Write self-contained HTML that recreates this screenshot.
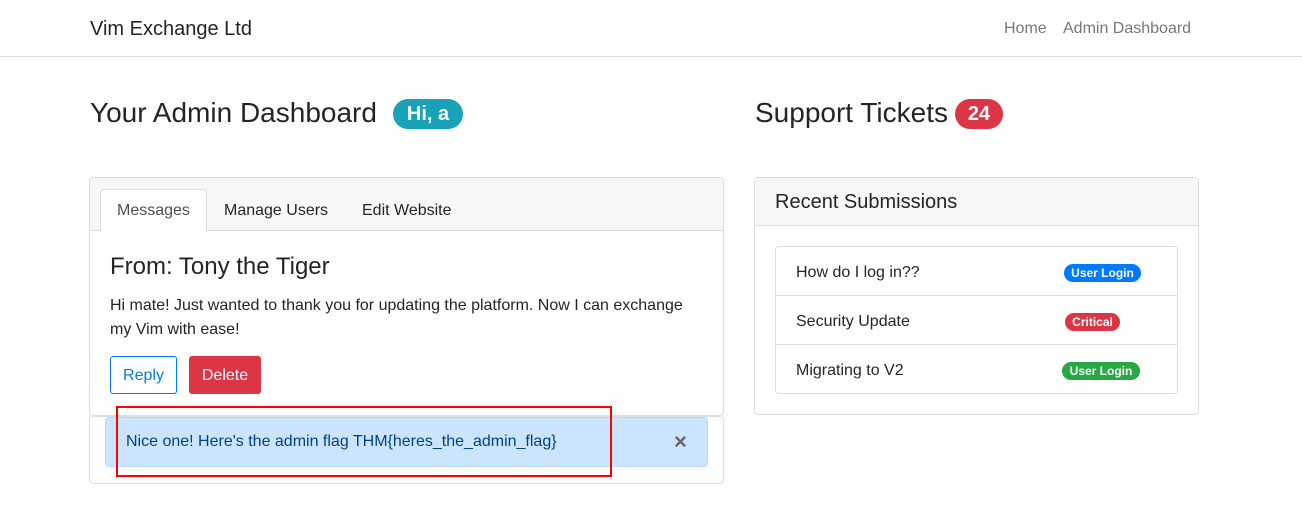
<!DOCTYPE html>
<html><head><style>
*{box-sizing:border-box;margin:0;padding:0}
body{width:1302px;height:520px;background:#fff;font-family:"Liberation Sans",sans-serif;color:#212529;position:relative;overflow:hidden}
.a{position:absolute;white-space:nowrap}
.badge{position:absolute;color:#fff;font-weight:bold;border-radius:999px;text-align:center}
.sm{font-size:12px;height:18px;line-height:18px}
</style></head><body>
<div class="a" style="left:0;top:0;width:1302px;height:57px;border-bottom:1px solid #ddd"></div>
<div class="a" style="left:90px;top:17px;font-size:20px;line-height:24px">Vim Exchange Ltd</div>
<div class="a" style="left:1004px;top:20px;font-size:16px;color:#777">Home</div>
<div class="a" style="left:1063px;top:20px;font-size:16px;color:#777">Admin Dashboard</div>

<div class="a" style="left:90px;top:96px;font-size:28px;line-height:34px">Your Admin Dashboard</div>
<div class="badge" style="left:393px;top:99px;width:70px;height:30px;line-height:30px;background:#17a2b8;font-size:20px">Hi, a</div>
<div class="a" style="left:755px;top:96px;font-size:28px;line-height:34px">Support Tickets</div>
<div class="badge" style="left:955px;top:99px;width:48px;height:30px;line-height:30px;background:#dc3545;font-size:20px">24</div>

<div class="a" style="left:89px;top:177px;width:635px;height:239px;border:1px solid #ddd;border-radius:4px"></div>
<div class="a" style="left:90px;top:178px;width:633px;height:53px;background:#f7f7f7;border-bottom:1px solid #ddd;border-radius:4px 4px 0 0"></div>
<div class="a" style="left:100px;top:189px;width:107px;height:43px;background:#fff;border:1px solid #ddd;border-bottom:none;border-radius:4px 4px 0 0"></div>
<div class="a" style="left:117px;top:202px;font-size:16px;color:#495057">Messages</div>
<div class="a" style="left:224px;top:202px;font-size:16px">Manage Users</div>
<div class="a" style="left:362px;top:202px;font-size:16px">Edit Website</div>
<div class="a" style="left:110px;top:253px;font-size:24px;line-height:28px">From: Tony the Tiger</div>
<div class="a" style="left:110px;top:294px;font-size:16px;line-height:24px">Hi mate! Just wanted to thank you for updating the platform. Now I can exchange<br>my Vim with ease!</div>
<div class="a" style="left:110px;top:356px;width:67px;height:38px;border:1px solid #007bff;border-radius:3px;color:#007bff;font-size:16px;line-height:38px;text-align:center">Reply</div>
<div class="a" style="left:189px;top:356px;width:72px;height:38px;background:#dc3545;border-radius:3px;color:#fff;font-size:16px;line-height:39px;text-align:center">Delete</div>

<div class="a" style="left:89px;top:416px;width:635px;height:68px;border:1px solid #ddd;border-radius:4px"></div>
<div class="a" style="left:105px;top:417px;width:603px;height:50px;background:#cce5ff;border:1px solid #b8daff;border-radius:4px"></div>
<div class="a" style="left:126px;top:433px;font-size:16px;color:#004085">Nice one! Here's the admin flag THM{heres_the_admin_flag}</div>
<div class="a" style="left:674px;top:429px;font-size:22px;font-weight:bold;color:#666">×</div>
<div class="a" style="left:116px;top:406px;width:496px;height:71px;border:2px solid #f00"></div>

<div class="a" style="left:754px;top:177px;width:445px;height:238px;border:1px solid #ddd;border-radius:4px"></div>
<div class="a" style="left:755px;top:178px;width:443px;height:48px;background:#f7f7f7;border-bottom:1px solid #ddd"></div>
<div class="a" style="left:775px;top:190px;font-size:20px;line-height:24px">Recent Submissions</div>
<div class="a" style="left:775px;top:246px;width:403px;height:148px;border:1px solid #ddd;border-radius:4px"></div>
<div class="a" style="left:776px;top:295px;width:401px;height:1px;background:#ddd"></div>
<div class="a" style="left:776px;top:344px;width:401px;height:1px;background:#ddd"></div>
<div class="a" style="left:796px;top:264px;font-size:16px">How do I log in??</div>
<div class="a" style="left:796px;top:313px;font-size:16px">Security Update</div>
<div class="a" style="left:796px;top:362px;font-size:16px">Migrating to V2</div>
<div class="badge sm" style="left:1064px;top:264px;width:77px;background:#007bff">User Login</div>
<div class="badge sm" style="left:1065px;top:313px;width:55px;background:#dc3545">Critical</div>
<div class="badge sm" style="left:1062px;top:362px;width:78px;background:#28a745">User Login</div>
</body></html>
